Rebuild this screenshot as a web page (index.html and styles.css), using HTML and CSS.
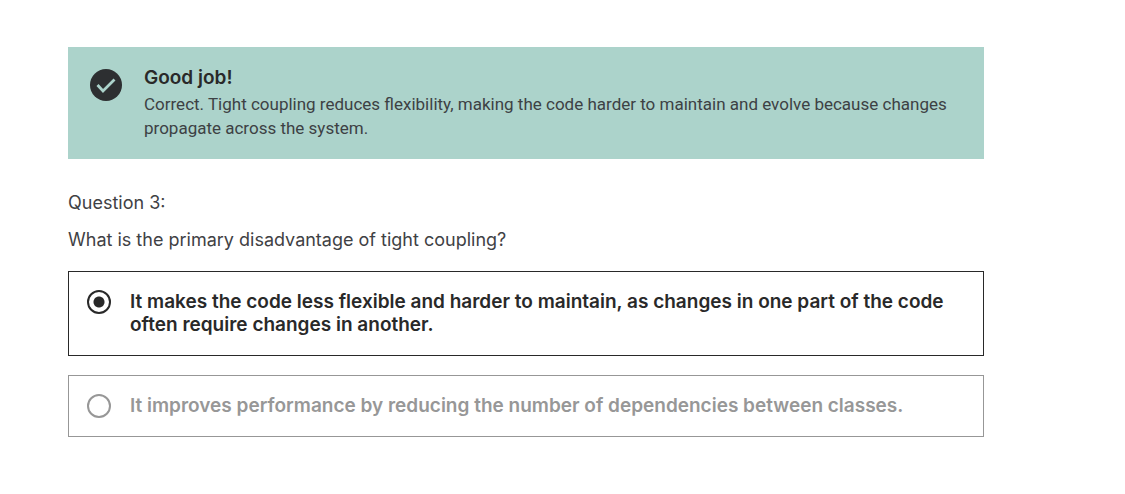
FILE: index.html
```html
<!DOCTYPE html>
<html lang="en">
<head>
<meta charset="utf-8">
<title>Question 3</title>
<link rel="stylesheet" href="styles.css">
</head>
<body>
<main class="quiz">
  <section class="feedback" role="status">
    <svg class="feedback-icon" viewBox="0 0 32 32" aria-hidden="true">
      <circle cx="16" cy="16" r="16" fill="#2d2f31"/>
      <path d="M7.500 16l5.500 6L24.500 10.500" fill="none" stroke="#acd3cb" stroke-width="2.800"/>
    </svg>
    <div class="feedback-body">
      <h2 class="feedback-title">Good job!</h2>
      <p class="feedback-text">Correct. Tight coupling reduces flexibility, making the code harder to maintain and evolve because changes propagate across the system.</p>
    </div>
  </section>
  <form class="question">
    <p class="question-number">Question 3:</p>
    <p class="question-text" id="prompt">What is the primary disadvantage of tight coupling?</p>
    <div class="options" role="radiogroup" aria-labelledby="prompt">
      <label class="option option-selected">
        <input class="option-radio" type="radio" name="answer" checked>
        <span class="option-text">It makes the code less flexible and harder to maintain, as changes in one part of the code often require changes in another.</span>
      </label>
      <label class="option">
        <input class="option-radio" type="radio" name="answer">
        <span class="option-text">It improves performance by reducing the number of dependencies between classes.</span>
      </label>
    </div>
  </form>
</main>
</body>
</html>
```
FILE: styles.css
```css
* { box-sizing: border-box; }
body {
  margin: 0;
  background: #fff;
  color: #292929;
  font-family: Inter, "Liberation Sans", sans-serif;
}
h2, p { margin: 0; }
.quiz { padding: 47px 141px 47px 68px; }
.feedback {
  display: flex;
  gap: 22px;
  padding: 18px 22px;
  background: #acd3cb;
}
.feedback-icon { flex: none; width: 32px; height: 32px; margin-top: 4px; }
.feedback-title { font-size: 19px; line-height: 26px; font-weight: 600; }
.feedback-text {
  padding: 1px 0;
  color: #3d4144;
  font-family: Roboto, sans-serif;
  font-size: 17px;
  line-height: 24px;
}
.question { padding-top: 32px; }
.question-number, .question-text { color: #3f4144; font-size: 18px; line-height: 24px; }
.question-text { padding-top: 13px; }
.options { display: grid; gap: 19px; padding-top: 19px; }
.option {
  display: flex;
  gap: 19px;
  padding: 18px;
  border: 1px solid #979797;
  color: #979797;
}
.option-selected { padding-bottom: 19px; border-color: #292929; color: #292929; }
.option-radio {
  appearance: none;
  flex: none;
  width: 24px;
  height: 24px;
  margin: 0;
  color: inherit;
  border: 2px solid currentColor;
  border-radius: 50%;
}
.option-radio:checked { background: radial-gradient(circle, currentColor 5px, transparent 6px); }
.option-text { padding-right: 18px; font-size: 19px; line-height: 23px; font-weight: 600; }
```
